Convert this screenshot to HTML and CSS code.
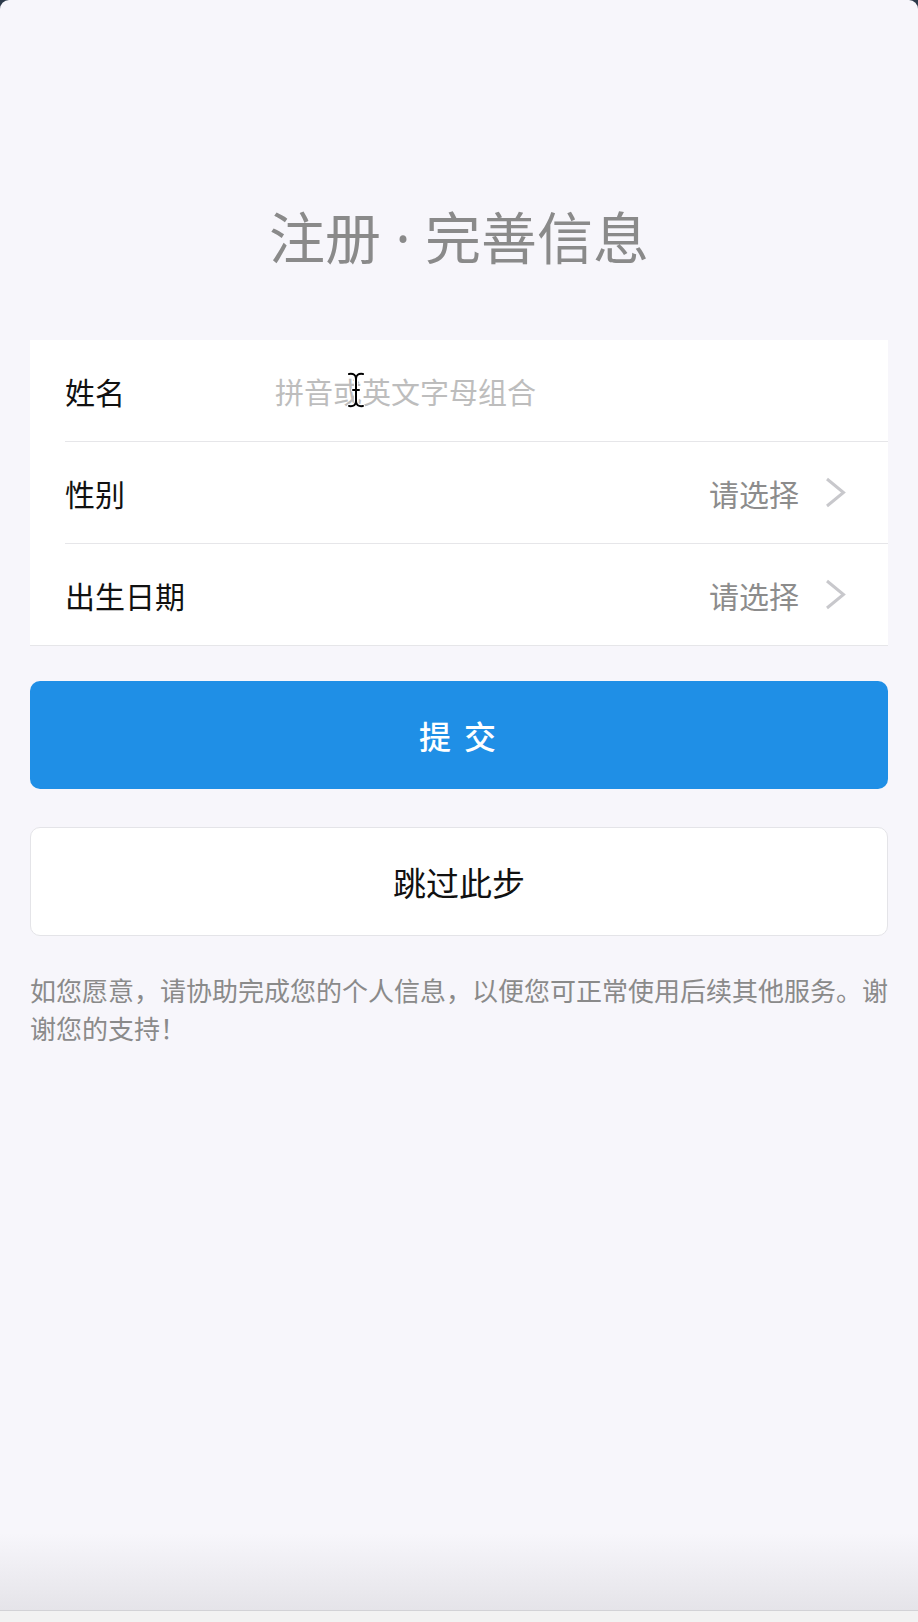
FILE: index.html
```html
<!DOCTYPE html>
<html lang="zh-CN">
<head>
    <meta charset="UTF-8">
    <meta name="viewport" content="width=device-width, initial-scale=1.0">
    <title>注册 · 完善信息</title>
    <link rel="stylesheet" href="styles.css">
</head>
<body>
    <div class="screen">
        <main class="content">
            <h1 class="title">注册 · 完善信息</h1>

            <div class="form-card">
                <div class="form-row">
                    <span class="label">姓名</span>
                    <span class="placeholder">拼音或英文字母组合</span>
                    <!-- mouse cursor over the input -->
                    <svg class="cursor" width="18" height="36" viewBox="0 0 18 36">
                        <path d="M2 2 Q9 1 9 7 Q9 1 16 2 M9 7 L9 29 M2 34 Q9 35 9 29 Q9 35 16 34 M6 18 L12 18" fill="none" stroke="#fff" stroke-width="4" stroke-linecap="round"/>
                        <path d="M2 2 Q9 1 9 7 Q9 1 16 2 M9 7 L9 29 M2 34 Q9 35 9 29 Q9 35 16 34 M6 18 L12 18" fill="none" stroke="#000" stroke-width="2" stroke-linecap="round"/>
                    </svg>
                </div>
                <div class="form-row">
                    <span class="label">性别</span>
                    <span class="select-value">请选择</span>
                    <svg class="chevron" width="21" height="31" viewBox="0 0 21 31">
                        <polyline points="2,2 18.5,15.5 2,29" fill="none" stroke="#c8c8cc" stroke-width="3"/>
                    </svg>
                </div>
                <div class="form-row">
                    <span class="label">出生日期</span>
                    <span class="select-value">请选择</span>
                    <svg class="chevron" width="21" height="31" viewBox="0 0 21 31">
                        <polyline points="2,2 18.5,15.5 2,29" fill="none" stroke="#c8c8cc" stroke-width="3"/>
                    </svg>
                </div>
            </div>

            <button class="btn btn-primary">提 交</button>
            <button class="btn btn-default">跳过此步</button>

            <p class="note">如您愿意，请协助完成您的个人信息，以便您可正常使用后续其他服务。谢谢您的支持！</p>
        </main>
        <div class="bottom-shade"></div>
        <div class="bottom-bar"></div>
    </div>
</body>
</html>
```

FILE: styles.css
```css
html {
    background-color: #2c3a4a; /* shows in the rounded window corners */
}
body {
    margin: 0;
    font-family: "Noto Sans CJK SC", "Noto Sans", sans-serif;
    color: #111111;
}
.screen {
    height: 100vh;
    display: flex;
    flex-direction: column;
    background-color: #f7f6fb;
    border-radius: 9px 9px 0 0;
    overflow: hidden;
}
.content {
    flex: 1;
    padding: 0 30px;
    display: flex;
    flex-direction: column;
}
.title {
    margin: 0 0 70px;
    padding-top: 204px;
    font-family: "Noto Sans", "Noto Sans CJK SC", sans-serif; /* narrow latin dot */
    font-size: 56px;
    line-height: 66px;
    font-weight: normal;
    color: #8a8a8a;
    text-align: center;
}
.form-card {
    background-color: #ffffff;
    padding-left: 35px;
    border-bottom: 1px solid #e6e6e9;
}
.form-row {
    position: relative;
    height: 101px;
    display: flex;
    align-items: center;
    padding-right: 42px;
    font-size: 30px;
}
.form-row + .form-row {
    border-top: 1px solid #e6e6e9;
}
.label {
    width: 210px;
    flex-shrink: 0;
}
.placeholder {
    font-size: 29px;
    color: #bdbdbd;
}
.select-value {
    margin-left: auto;
    margin-right: 26px;
    color: #8c8c8c;
}
.chevron {
    display: block;
}
.cursor {
    position: absolute;
    left: 282px;
    top: 32px;
}
.btn {
    display: block;
    width: 100%;
    border-radius: 10px;
    font-family: inherit;
    cursor: pointer;
}
.btn-primary {
    margin-top: 35px;
    height: 108px;
    border: none;
    background-color: #1f8fe6;
    color: #ffffff;
    font-size: 32px;
    font-weight: 500;
    letter-spacing: 3px;
}
.btn-default {
    margin-top: 38px;
    height: 109px;
    border: 1px solid #e4e4e8;
    background-color: #ffffff;
    color: #111111;
    font-size: 33px;
}
.note {
    margin: 35px -8px 0 0; /* a few px of slack so the 32nd glyph stays on line one */
    font-size: 26px;
    line-height: 38px;
    color: #8a8a8a;
}
.bottom-shade {
    height: 77px;
    background: linear-gradient(to bottom, rgba(230, 229, 234, 0), #e5e4e9);
    border-bottom: 1px solid #d2d2d6;
}
.bottom-bar {
    height: 11px;
    background-color: #f2f2f2;
}
```
